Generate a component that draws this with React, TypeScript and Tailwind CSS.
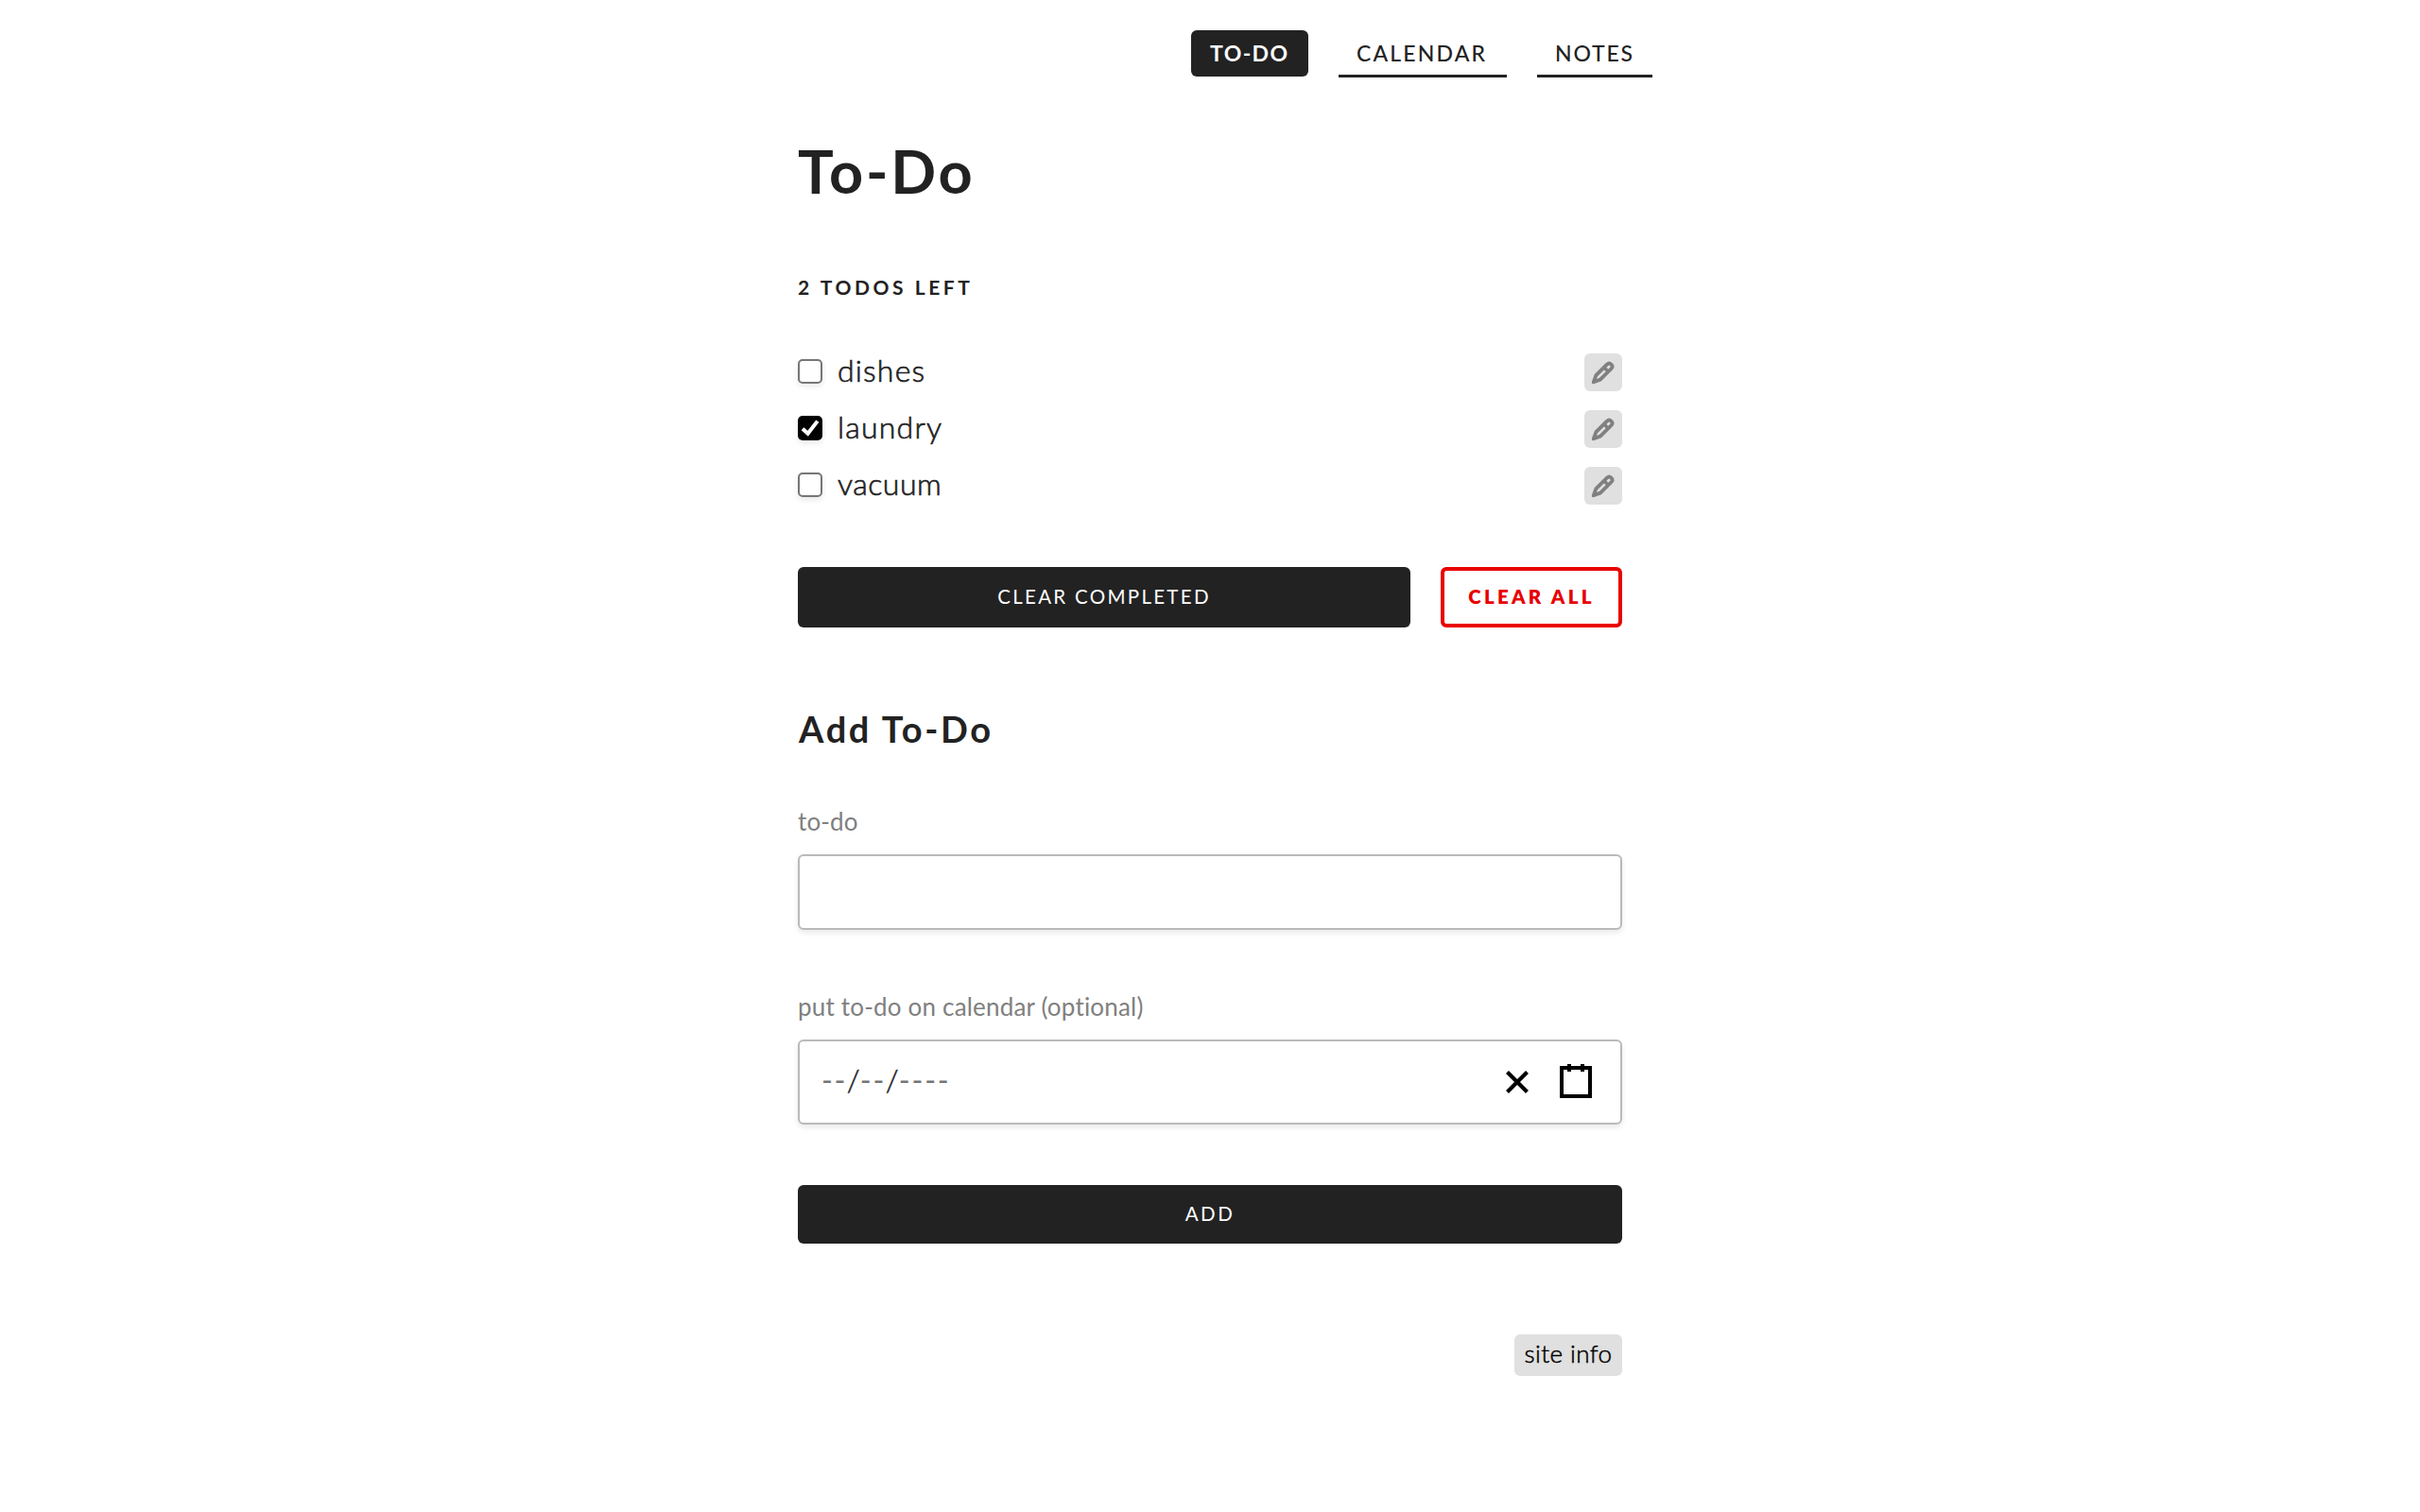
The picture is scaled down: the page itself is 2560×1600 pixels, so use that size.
import { useState } from "react";

function PencilIcon() {
  return (
    <svg viewBox="0 0 40 40" className="size-10" fill="none" stroke="#808080" strokeLinejoin="round">
      <path d="M9.8 30.2 L12.4 23.2 L23.9 11.6 Q26.2 9.6 28.4 11.6 L28.6 11.8 Q30.6 13.9 28.6 16 L16.9 27.6 Z" strokeWidth="3.8" />
      <path d="M20.5 14.5 L25.5 19.5" strokeWidth="3.6" />
      <path d="M8 32.2 L10.3 25.5 L14.7 29.8 Z" fill="#808080" stroke="none" />
    </svg>
  );
}

function CheckIcon() {
  return (
    <svg viewBox="0 0 26 26" className="size-[26px]" fill="none" stroke="#fff" strokeWidth="4">
      <path d="M5 13.8 L10.6 18.8 L20.8 5.6" />
    </svg>
  );
}

function DateField() {
  return (
    <div className="mt-5 flex h-[90px] items-center rounded-md border-2 border-[#bababa] bg-white pl-[22px] pr-[30px] shadow-[0_3px_6px_rgba(0,0,0,0.09)]">
      <div className="flex h-[38px] text-[32px] leading-[34px] text-[#757575]">
        {"--/--/----".split("").map((c, i) => (
          <span
            key={i}
            className={
              c === "/"
                ? "flex w-[13.66px] justify-center pl-px font-light text-[#222] [-webkit-text-stroke:0.5px]"
                : "flex w-[13.66px] justify-center"
            }
          >
            {c}
          </span>
        ))}
      </div>
      <svg viewBox="0 0 24 24" className="ml-auto size-6" stroke="#000" strokeWidth="4.2">
        <path d="M1.5 1.5 L22.5 22.5 M22.5 1.5 L1.5 22.5" />
      </svg>
      <svg viewBox="0 0 34 36" className="ml-[33px] mb-0.5 h-9 w-[34px]" fill="none" stroke="#000" strokeWidth="4">
        <path d="M2 4 H32 V34 H2 Z M10 0 V8 M24 0 V8" />
      </svg>
    </div>
  );
}

export default function App() {
  const [items, setItems] = useState([
    { name: "dishes", done: false, style: "tracking-[1.17px]" },
    { name: "laundry", done: true, style: "tracking-[1.22px]" },
    { name: "vacuum", done: false, style: "tracking-[0.5px]" },
  ]);
  const toggle = (n: number) =>
    setItems(items.map((it, i) => (i === n ? { ...it, done: !it.done } : it)));

  return (
    <div className="min-h-[1600px] bg-white pt-8 font-['Lato',sans-serif] text-[#222]">
      <main className="mx-auto flex w-[872px] flex-col">
        <nav className="-mr-8 flex h-[50px] items-start justify-end gap-8 text-[23px] leading-[48px]">
          <a className="h-[49px] w-[124px] rounded-md bg-[#222] pl-5 font-bold tracking-[1.4px] text-white">TO-DO</a>
          <a className="h-[50px] w-[178px] border-b-3 border-[#222] pl-[19px] font-medium tracking-[2.15px]">CALENDAR</a>
          <a className="h-[50px] w-[122px] border-b-3 border-[#222] pl-[19px] font-medium tracking-[1.8px]">NOTES</a>
        </nav>

        <h1 className="mt-[61px] text-[63px] font-bold leading-[76px] tracking-[2.75px]">To-Do</h1>
        <p className="mt-[73px] text-[21px] font-bold leading-6 tracking-[3.55px]">2 TODOS LEFT</p>

        <ul className="mt-[58px] flex flex-col gap-5">
          {items.map((it, i) => (
            <li key={it.name} className="flex h-10 items-start">
              <button
                onClick={() => toggle(i)}
                className={
                  it.done
                    ? "mt-1.5 size-[26px] rounded-[5px] bg-black shadow-[0_3px_6px_rgba(0,0,0,0.09)]"
                    : "mt-1.5 size-[26px] rounded-[5px] border-2 border-[#767676] bg-white shadow-[0_3px_6px_rgba(0,0,0,0.09)]"
                }
              >
                {it.done && <CheckIcon />}
              </button>
              <span className={`ml-4 text-[32px] font-light leading-[35px] [-webkit-text-stroke:0.65px] ${it.style}`}>
                {it.name}
              </span>
              <button className="ml-auto size-10 rounded-md bg-[#e0e0e0]">
                <PencilIcon />
              </button>
            </li>
          ))}
        </ul>

        <div className="mt-[66px] flex h-16 gap-8">
          <button className="flex-1 rounded-md bg-[#222] pb-0.5 text-[20.5px] tracking-[2.3px] text-white">CLEAR COMPLETED</button>
          <button className="w-48 rounded-md border-4 border-[#e80000] pb-0.5 text-[20.5px] font-extrabold tracking-[3.25px] text-[#e80000]">CLEAR ALL</button>
        </div>

        <h2 className="mt-[84px] pl-px text-[38px] font-bold leading-[46px] tracking-[2.65px]">Add To-Do</h2>

        <label className="mt-[59px] text-[26px] leading-8 tracking-[0.15px] text-[#808080]">to-do</label>
        <input className="mt-[19px] h-20 rounded-md border-2 border-[#bababa] bg-white px-6 text-[32px] shadow-[0_3px_6px_rgba(0,0,0,0.09)] outline-none" />

        <label className="mt-[65px] -mb-px text-[26px] leading-8 tracking-[0.19px] text-[#808080]">put to-do on calendar (optional)</label>
        <DateField />

        <button className="mt-16 h-[62px] rounded-md bg-[#222] pb-px text-[20.5px] tracking-[2.5px] text-white">ADD</button>
        <button className="mt-24 h-11 w-[114px] self-end rounded-md bg-[#e0e0e0] pb-1 text-[26px] font-light tracking-[0.45px] text-black [-webkit-text-stroke:0.5px]">site info</button>
      </main>
    </div>
  );
}
